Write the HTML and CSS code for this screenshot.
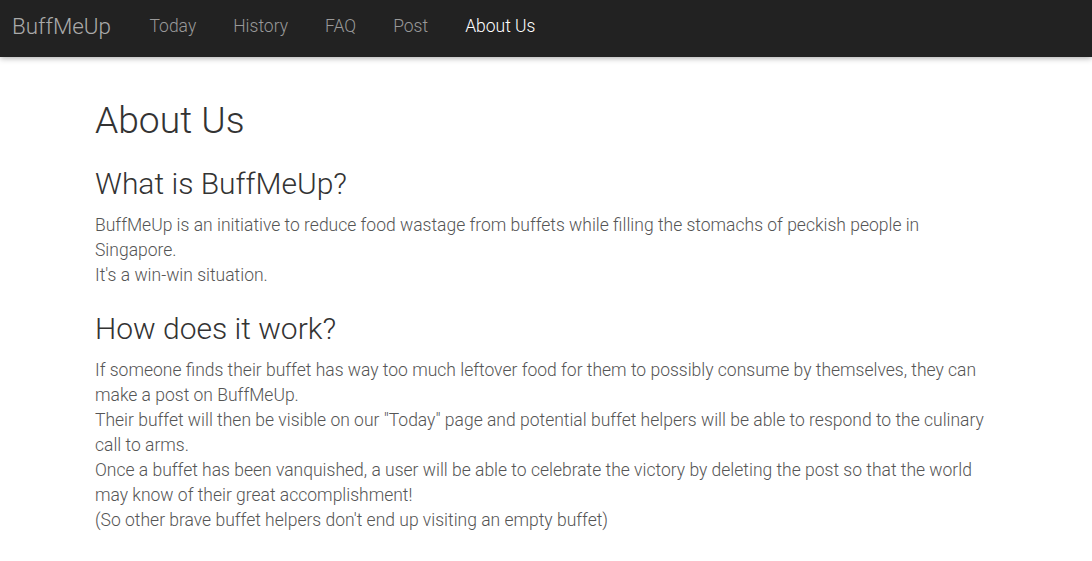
FILE: index.html
```html
<!DOCTYPE html>
<html lang="en">
<head>
<meta charset="utf-8">
<title>BuffMeUp - About Us</title>
<link rel="stylesheet" href="styles.css">
</head>
<body>
<nav class="navbar">
  <a class="brand" href="#">BuffMeUp</a>
  <ul class="nav">
    <li><a href="#">Today</a></li>
    <li><a href="#">History</a></li>
    <li><a href="#">FAQ</a></li>
    <li><a href="#">Post</a></li>
    <li><a class="active" href="#">About Us</a></li>
  </ul>
</nav>
<main class="container">
  <h1 class="title">About Us</h1>
  <h2 class="section-title">What is BuffMeUp?</h2>
  <p class="text">BuffMeUp is an initiative to reduce food wastage from buffets while filling the stomachs of peckish people in Singapore.<br>It's a win-win situation.</p>
  <h2 class="section-title">How does it work?</h2>
  <p class="text">If someone finds their buffet has way too much leftover food for them to possibly consume by themselves, they can make a post on BuffMeUp.<br>Their buffet will then be visible on our "Today" page and potential buffet helpers will be able to respond to the culinary call to arms.<br>Once a buffet has been vanquished, a user will be able to celebrate the victory by deleting the post so that the world may know of their great accomplishment!<br>(So other brave buffet helpers don't end up visiting an empty buffet)</p>
</main>
</body>
</html>
```
FILE: styles.css
```css
html, body {
  margin: 0;
  padding: 0;
  background: #fff;
}
body {
  font-family: Roboto, "Liberation Sans", sans-serif;
  font-weight: 300;
  color: #555;
  font-size: 17.5px;
  line-height: 25px;
}
.navbar {
  height: 57px;
  box-sizing: border-box;
  padding: 0 12px 4px;
  background: #222;
  display: flex;
  align-items: center;
  box-shadow: 0 1px 6px rgba(0, 0, 0, 0.35);
  position: relative;
}
.brand {
  font-size: 22.4px;
  color: #aaa;
  text-decoration: none;
  margin-right: 20px;
}
.nav {
  display: flex;
  list-style: none;
  margin: 0;
  padding: 0;
}
.nav a {
  display: block;
  padding: 0 18.5px;
  font-size: 17.5px;
  color: #999;
  text-decoration: none;
}
.nav a.active {
  color: #fff;
}
.container {
  max-width: 902px;
  margin: 0 auto;
  padding-top: 39px;
}
.title {
  font-size: 37.2px;
  line-height: 48px;
  font-weight: 300;
  color: #333;
  margin: 0 0 21px;
}
.section-title {
  font-size: 30px;
  line-height: 38px;
  font-weight: 300;
  color: #333;
  margin: 0 0 10px;
}
.text {
  margin: 0 0 22px;
}
```
